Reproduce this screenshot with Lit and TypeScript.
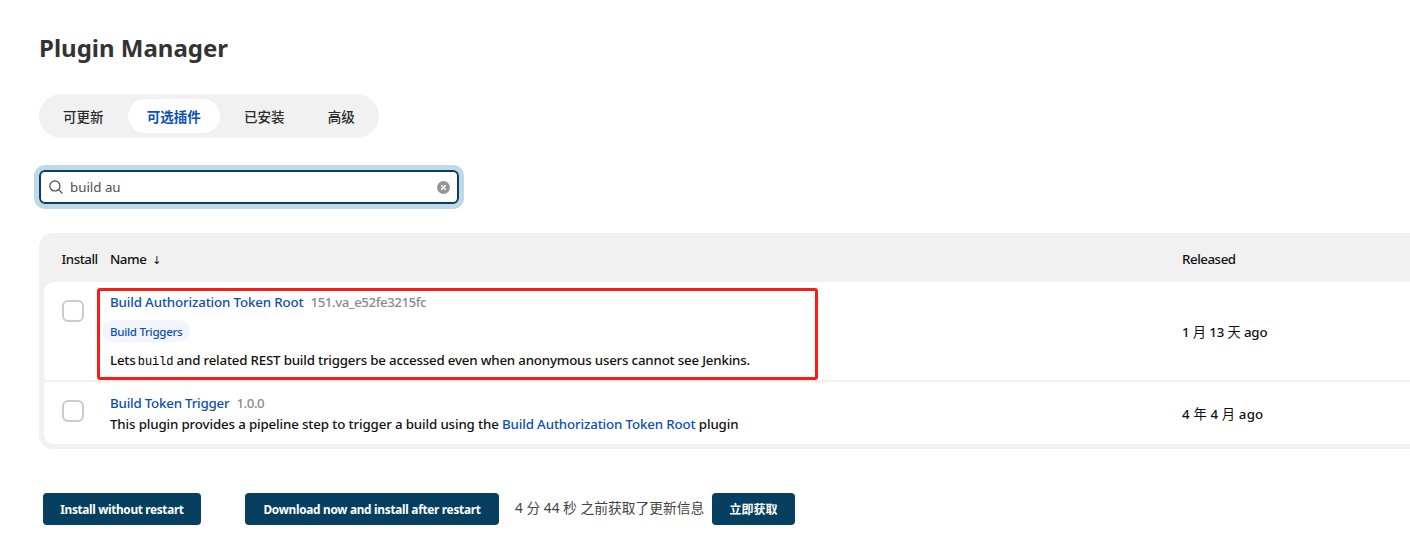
import { LitElement, html, css } from "lit";
import { customElement, property, state } from "lit/decorators.js";
import { classMap } from "lit/directives/class-map.js";

const TABS = ["可更新", "可选插件", "已安装", "高级"];

@customElement("tab-bar")
class TabBar extends LitElement {
  @state() active = 1;
  static styles = css`
    :host { display: flex; }
    .bar { display: flex; gap: 5px; box-sizing: border-box; height: 44px; padding: 5px; border-radius: 22px; background: #f1f1f1; }
    .tab { box-sizing: border-box; height: 34px; padding: 0 19.12px; border-radius: 17px; font-size: 13.5px; line-height: 36px; font-weight: 500; color: #2b2b2b; cursor: pointer; white-space: nowrap; }
    .active { background: #fff; color: #0b4fb8; font-weight: 700; }
  `;
  render() {
    return html`<div class="bar">${TABS.map((t, i) => html`<div class=${classMap({ tab: true, active: i === this.active })} @click=${() => (this.active = i)}>${t}</div>`)}</div>`;
  }
}

@customElement("search-field")
class SearchField extends LitElement {
  @property() value = "";
  static styles = css`
    :host { display: block; }
    .box { display: flex; align-items: center; box-sizing: border-box; width: 420px; height: 34px; padding: 0 7px 0 8px; border: 2px solid #073f60; border-radius: 6px; box-shadow: 0 0 0 5px #c0d9e7; }
    .text { flex: 1; margin-left: 7px; font-size: 13.3px; line-height: 20px; color: #505050; }
    svg { display: block; }
  `;
  render() {
    return html`<div class="box">
      <svg width="14" height="14" viewBox="0 0 14 14" fill="none" stroke="#444" stroke-width="1.15" stroke-linecap="round"><circle cx="5.9" cy="5.9" r="5.1" /><path d="M9.6 9.6 13.1 13.1" /></svg>
      <span class="text">${this.value}</span>
      <svg width="13" height="13" viewBox="0 0 13 13"><circle cx="6.5" cy="6.5" r="6.5" fill="#959595" /><path d="M4.3 4.3 8.7 8.7M8.7 4.3 4.3 8.7" stroke="#fff" stroke-width="1.5" /></svg>
    </div>`;
  }
}

@customElement("plugin-table")
class PluginTable extends LitElement {
  static styles = css`
    :host { display: block; }
    .table { box-sizing: border-box; width: 1400px; padding: 0 5px 5px; border-radius: 14px; background: #f1f1f1; display: flex; flex-direction: column; gap: 2px; font-size: 13.3px; font-weight: 500; color: #111; }
    .row { display: grid; grid-template-columns: 66px 1072px 1fr; background: #fff; border-radius: 4px; }
    .head { background: none; height: 47px; line-height: 52px; letter-spacing: -0.45px; }
    .head .install { padding-left: 17.5px; }
    .install, .name, .released { white-space: nowrap; }
    .first { height: 98px; border-radius: 10px 10px 4px 4px; }
    .last { height: 62px; border-radius: 4px 4px 10px 10px; }
    .check { box-sizing: border-box; width: 22px; height: 22px; margin: 18px 0 0 18px; border: 2px solid #c3cdd2; border-radius: 6px; background: #fff; }
    .cell { display: flex; flex-direction: column; align-items: flex-start; }
    .line { line-height: 20px; white-space: nowrap; letter-spacing: -0.135px; }
    .first .cell { padding-top: 10px; }
    .last .cell { padding-top: 11px; }
    .last .line { line-height: 21px; }
    .link { color: #0b4fb8; }
    .version { color: #888c90; margin-left: 7px; letter-spacing: -0.45px; }
    .lead { letter-spacing: -0.19px; }
    .tight { letter-spacing: -0.2px; }
    .tag { box-sizing: border-box; height: 22px; margin: 8px 0 8px -8px; padding: 0 8px; border-radius: 11px; background: #f2f6fc; color: #0b4fb8; font-size: 11.6px; line-height: 23px; white-space: nowrap; letter-spacing: -0.32px; }
    .code { font-family: "Liberation Mono", monospace; font-size: 12px; font-weight: 400; letter-spacing: -0.1px; margin-left: -1px; color: #000; }
    .released { align-self: center; line-height: 20px; }
    .head .released { align-self: start; line-height: 52px; }
    .date { padding-top: 1px; letter-spacing: -0.15px; }
    .last .date { letter-spacing: 0.15px; }
    .cjk { font-weight: 400; }
    .arrow { font-family: "DejaVu Sans", sans-serif; font-size: 11px; margin-left: 6px; }
  `;
  render() {
    return html`<div class="table">
      <div class="row head"><span class="install">Install</span><span class="name">Name<span class="arrow">↓</span></span><span class="released">Released</span></div>
      <div class="row first">
        <div class="check"></div>
        <div class="cell">
          <div class="line"><span class="link">Build Authorization Token Root</span><span class="version">151.va_e52fe3215fc</span></div>
          <div class="tag">Build Triggers</div>
          <div class="line lead">Lets <span class="code">build</span> and related REST build triggers be accessed even when anonymous users cannot see Jenkins.</div>
        </div>
        <div class="released date">1 <span class="cjk">月</span> 13 <span class="cjk">天</span> ago</div>
      </div>
      <div class="row last">
        <div class="check"></div>
        <div class="cell">
          <div class="line"><span class="link tight">Build Token Trigger</span><span class="version">1.0.0</span></div>
          <div class="line">This plugin provides a pipeline step to trigger a build using the <span class="link">Build Authorization Token Root</span> plugin</div>
        </div>
        <div class="released date">4 <span class="cjk">年</span> 4 <span class="cjk">月</span> ago</div>
      </div>
    </div>`;
  }
}

@customElement("app-root")
class AppRoot extends LitElement {
  static styles = css`
    :host { display: block; width: 1410px; height: 541px; overflow: hidden; position: relative; background: #fff; font-family: "Noto Sans", "Noto Sans CJK SC", sans-serif; color: #333; }
    .page { padding: 30px 0 0 39px; }
    .title { margin: 0; height: 64px; font-size: 24px; line-height: 36px; font-weight: 700; }
    search-field { margin-top: 32px; }
    plugin-table { margin-top: 29px; }
    .actions { display: flex; margin: 44px 0 0 4px; align-items: flex-start; }
    .btn { box-sizing: border-box; height: 32px; border: 0; border-radius: 4px; padding: 0; background: #073f60; color: #fff; font-family: inherit; font-size: 11.8px; font-weight: 700; line-height: 33px; text-align: center; white-space: nowrap; letter-spacing: -0.27px; }
    .b1 { width: 158px; margin-right: 44px; letter-spacing: -0.32px; }
    .b2 { width: 254px; }
    .b3 { width: 83px; font-size: 12px; letter-spacing: 0; }
    .info { width: 213px; box-sizing: border-box; padding-left: 16px; font-size: 13.75px; line-height: 30px; white-space: nowrap; color: #444; }
    .mark { position: absolute; left: 97px; top: 288px; box-sizing: border-box; width: 721px; height: 92px; border: 3px solid #fb1d14; border-radius: 3px; pointer-events: none; }
  `;
  render() {
    return html`<div class="page">
        <h1 class="title">Plugin Manager</h1>
        <tab-bar></tab-bar>
        <search-field value="build au"></search-field>
        <plugin-table></plugin-table>
        <div class="actions">
          <button class="btn b1">Install without restart</button>
          <button class="btn b2">Download now and install after restart</button>
          <span class="info">4 分 44 秒 之前获取了更新信息</span>
          <button class="btn b3">立即获取</button>
        </div>
      </div>
      <div class="mark"></div>`;
  }
}
